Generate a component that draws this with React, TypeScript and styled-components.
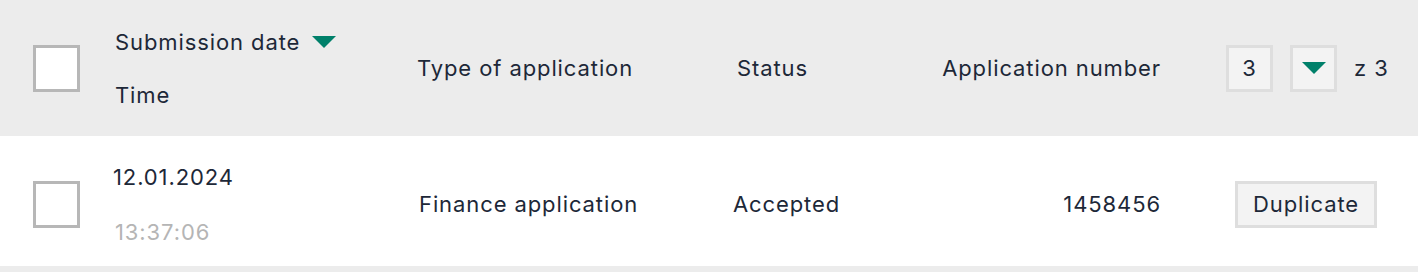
import styled, { createGlobalStyle } from "styled-components"

const GlobalStyle = createGlobalStyle`
    body {
        margin: 0;
        background: #ececec;
        font-family: "Inter", "Liberation Sans", sans-serif;
        color: #1d2838;
    }
`

const Table = styled.div`
    width: 1418px;
    height: 272px;
    background-color: #ececec;
`

const Row = styled.div<{ header?: boolean }>`
    display: grid;
    grid-template-columns: 115px 302px 320px 200px 224px 1fr;
    align-items: center;
    box-sizing: border-box;
    height: ${({ header }) => (header ? "136px" : "130px")};
    padding-top: ${({ header }) => (header ? "0" : "6px")};
    background-color: ${({ header }) => (header ? "#ececec" : "#ffffff")};
    font-size: 22px;
    letter-spacing: 0.9px;
`

const CheckCell = styled.div`
    padding-left: 33px;
    display: flex;
    align-items: center;
`

const Checkbox = styled.div`
    width: 47px;
    height: 47px;
    box-sizing: border-box;
    border: solid 3px #b7b7b7;
    background-color: #ffffff;
`

const Cell = styled.div<{ shift?: number; right?: boolean }>`
    margin-left: ${({ shift = 0 }) => `${shift}px`};
    text-align: ${({ right }) => (right ? "right" : "left")};
    white-space: nowrap;
`

const Stack = styled.div<{ gap: number }>`
    display: flex;
    flex-direction: column;
    gap: ${({ gap }) => `${gap}px`};
`

const SortTitle = styled.div`
    display: flex;
    align-items: center;
    gap: 12px;
`

const Triangle = styled.span`
    width: 0;
    height: 0;
    border-left: 12.5px solid transparent;
    border-right: 12.5px solid transparent;
    border-top: 12px solid #00806a;
`

const TimeText = styled.div`
    color: #b5b5b5;
`

const Pager = styled.div`
    display: flex;
    align-items: center;
    gap: 17px;
    padding-left: 65px;
`

const PageBox = styled.div`
    width: 47px;
    height: 47px;
    box-sizing: border-box;
    border: solid 3px #dedede;
    background-color: #f3f3f3;
    display: flex;
    align-items: center;
    justify-content: center;
`

const ActionCell = styled.div`
    padding-left: 74px;
`

const DuplicateButton = styled.button`
    height: 47px;
    width: 142px;
    padding: 0;
    box-sizing: border-box;
    border: solid 3px #dedede;
    background-color: #f3f3f3;
    font-family: inherit;
    font-size: 22px;
    letter-spacing: 0.9px;
    color: #1d2838;
`

export default function App() {
    return (
        <Table>
            <GlobalStyle />
            <Row header>
                <CheckCell><Checkbox /></CheckCell>
                <Stack gap={27}>
                    <SortTitle>Submission date <Triangle /></SortTitle>
                    <div>Time</div>
                </Stack>
                <Cell>Type of application</Cell>
                <Cell>Status</Cell>
                <Cell right>Application number</Cell>
                <Pager>
                    <PageBox>3</PageBox>
                    <PageBox><Triangle /></PageBox>
                    <span>z 3</span>
                </Pager>
            </Row>
            <Row>
                <CheckCell><Checkbox /></CheckCell>
                <Stack gap={29}>
                    <Cell shift={-2}>12.01.2024</Cell>
                    <TimeText>13:37:06</TimeText>
                </Stack>
                <Cell shift={2}>Finance application</Cell>
                <Cell shift={-4}>Accepted</Cell>
                <Cell right>1458456</Cell>
                <ActionCell><DuplicateButton>Duplicate</DuplicateButton></ActionCell>
            </Row>
        </Table>
    )
}
